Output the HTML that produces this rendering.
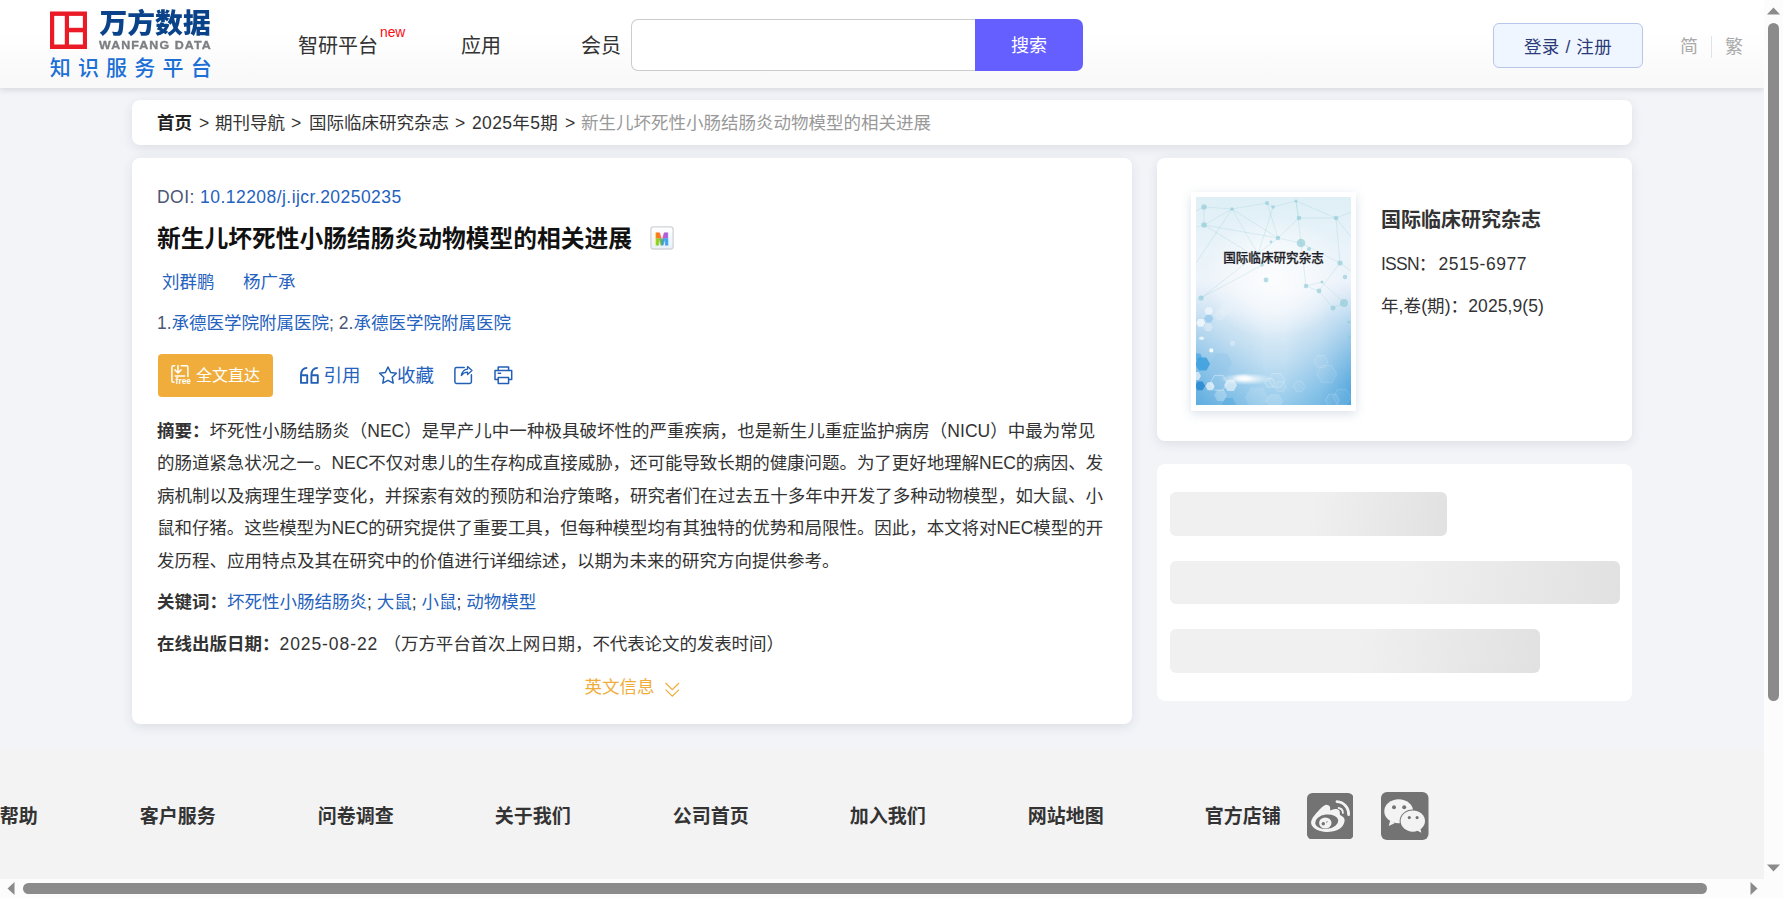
<!DOCTYPE html>
<html lang="zh-CN">
<head>
<meta charset="utf-8">
<title>新生儿坏死性小肠结肠炎动物模型的相关进展 - 万方数据知识服务平台</title>
<style>
*{box-sizing:border-box;margin:0;padding:0}
html,body{width:1783px;height:898px;overflow:hidden;background:#f2f4f8}
body{position:relative;font-family:"Liberation Sans","Noto Sans CJK SC",sans-serif;color:#333;font-size:17.5px;-webkit-font-smoothing:antialiased}
a{color:inherit;text-decoration:none}
.abs{position:absolute;white-space:nowrap}
#view{position:absolute;left:0;top:0;width:1764px;height:879px;overflow:hidden;background:#f2f4f8}
/* header */
#hdr{position:absolute;left:0;top:0;width:1764px;height:88px;background:linear-gradient(180deg,#ffffff 0%,#ffffff 35%,#f8f8f9 100%);box-shadow:0 2px 6px rgba(40,45,60,.14);z-index:5}
.nav{position:absolute;top:31.8px;height:28px;line-height:28px;font-size:20px;color:#333;white-space:nowrap}
#srch{position:absolute;left:631.4px;top:19px;width:345px;height:52px;border:1px solid #ccc;border-right:0;border-radius:7px 0 0 7px;background:#fff}
#sbtn{position:absolute;left:975.4px;top:19px;width:107.4px;height:52px;border-radius:0 7px 7px 0;background:#665fff;color:#fff;font-size:18px;line-height:52px;padding-top:1.4px;text-align:center;overflow:hidden}
#login{position:absolute;left:1493px;top:23px;width:150px;height:45px;border:1px solid #b7c7ea;border-radius:6px;background:#f0f6ff;color:#2b3a78;font-size:17.5px;line-height:43px;padding-top:1.6px;word-spacing:.6px;letter-spacing:.3px;text-align:center;overflow:hidden}
.lang{position:absolute;top:33.8px;font-size:18px;line-height:26px;color:#aaa}
/* cards */
.card{position:absolute;background:#fff;border-radius:8px;box-shadow:0 3px 11px rgba(40,50,70,.105)}
.ln{position:absolute;margin-top:1px;left:157px;white-space:nowrap;height:32px;line-height:32px;font-size:17.5px;color:#333}
b,.b{font-weight:700}
.blue,.ln.blue,.ln .blue{color:#2562be}
.sk{position:absolute;left:1170px;border-radius:6px;background:linear-gradient(100deg,#f0f0f0 0%,#f0f0f0 50%,#e1e1e1 100%)}
/* footer */
#ftr{position:absolute;left:0;top:749px;width:1764px;height:130px;background:#f3f3f3}
.fl{position:absolute;top:803px;margin-left:.8px;height:28px;line-height:28px;font-size:19px;font-weight:700;color:#333;white-space:nowrap}
/* scrollbars */
#vsb{position:absolute;left:1764px;top:0;width:19px;height:879px;background:#fcfcfc}
#hsb{position:absolute;left:0;top:879px;width:1783px;height:19px;background:#fcfcfc}
.thumb{position:absolute;background:#8b8b8b;border-radius:6px}
</style>
</head>
<body>
<div id="view">

<!-- HEADER -->
<div id="hdr">
  <svg class="abs" style="left:50px;top:11px" width="38" height="38" viewBox="0 0 38 38">
    <rect x="0" y="0.5" width="37" height="37.5" fill="#ea1b26"/>
    <rect x="4.2" y="4.9" width="10.6" height="28.6" fill="#fff"/>
    <rect x="19" y="4.9" width="13.9" height="11.9" fill="#fff"/>
    <rect x="19" y="21.3" width="13.9" height="12.2" fill="#fff"/>
  </svg>
  <div class="abs" style="left:99.5px;top:6.3px;font-size:27.8px;line-height:36px;font-weight:900;color:#0a4389;transform:scaleY(.99);transform-origin:0 0;font-family:'Liberation Sans','Noto Sans CJK SC',sans-serif;">万方数据</div>
  <div class="abs" style="left:99px;top:38px;font-size:11.5px;line-height:14px;font-weight:700;color:#7d7e82;letter-spacing:1.02px;transform:scaleX(1.08);transform-origin:0 0;-webkit-text-stroke:.35px #7d7e82;">WANFANG DATA</div>
  <div class="abs" style="left:49.7px;top:52.8px;font-weight:500;font-size:21px;line-height:30px;color:#1b6fd6;letter-spacing:7.2px;">知识服务平台</div>

  <div class="nav" style="left:298px">智研平台</div>
  <div class="abs" style="left:380px;top:25px;font-size:13.8px;line-height:16px;color:#fb0a12">new</div>
  <div class="nav" style="left:461px">应用</div>
  <div class="nav" style="left:581px">会员</div>

  <div id="srch"></div>
  <div id="sbtn">搜索</div>

  <div id="login">登录 / 注册</div>
  <div class="lang" style="left:1680px">简</div>
  <div class="abs" style="left:1711px;top:36px;width:1px;height:22px;background:#e3e3e3"></div>
  <div class="lang" style="left:1725px">繁</div>
</div>

<!-- BREADCRUMB -->
<div class="card" style="left:132px;top:100px;width:1500px;height:45px"></div>
<div class="ln" id="bc1" style="top:106px;left:157px;font-weight:700;color:#222">首页</div>
<div class="ln" style="top:106px;left:199px">&gt;</div>
<div class="ln" id="bc2" style="top:106px;left:215px">期刊导航</div>
<div class="ln" style="top:106px;left:291px">&gt;</div>
<div class="ln" id="bc3" style="top:106px;left:309px">国际临床研究杂志</div>
<div class="ln" style="top:106px;left:455px">&gt;</div>
<div class="ln" id="bc4" style="top:106px;left:472px;letter-spacing:.35px">2025年5期</div>
<div class="ln" style="top:106px;left:565px">&gt;</div>
<div class="ln" id="bc5" style="top:106px;left:581px;color:#999">新生儿坏死性小肠结肠炎动物模型的相关进展</div>

<!-- MAIN CARD -->
<div class="card" style="left:132px;top:158px;width:1000px;height:566px"></div>
<div class="ln" id="doi" style="top:180.2px;color:#4b5674;letter-spacing:.45px">DOI: <span class="blue">10.12208/j.ijcr.20250235</span></div>
<div class="abs" id="ttl" style="left:157px;top:220.8px;font-size:23.75px;line-height:36px;font-weight:700;color:#111">新生儿坏死性小肠结肠炎动物模型的相关进展</div>
<svg class="abs" id="mbadge" style="left:649px;top:225px" width="26" height="26" viewBox="649 225 26 26">
  <defs>
    <linearGradient id="mbg" x1="0" y1="0" x2="0" y2="1"><stop offset="0" stop-color="#ffffff"/><stop offset="1" stop-color="#e9f0f9"/></linearGradient>
    <linearGradient id="mtop" x1="0" y1="0" x2="1" y2="0"><stop offset="0" stop-color="#fb7a10"/><stop offset=".34" stop-color="#f9761a"/><stop offset=".5" stop-color="#e8504a"/><stop offset=".68" stop-color="#b35ad6"/><stop offset="1" stop-color="#a45ee0"/></linearGradient>
    <linearGradient id="mbot" x1="0" y1="0" x2="1" y2="0"><stop offset="0" stop-color="#8fd018"/><stop offset=".32" stop-color="#86c926"/><stop offset=".5" stop-color="#4aa596"/><stop offset=".7" stop-color="#3f9fe6"/><stop offset="1" stop-color="#3aa0ee"/></linearGradient>
    <clipPath id="mc1"><rect x="649" y="225" width="26" height="13.4"/></clipPath>
    <clipPath id="mc2"><rect x="649" y="238.4" width="26" height="13"/></clipPath>
  </defs>
  <rect x="650.9" y="226.8" width="22.2" height="22.2" rx="2.6" fill="url(#mbg)" stroke="#d2d4d8" stroke-width="1.3"/>
  <text x="661.9" y="244.6" text-anchor="middle" font-family="'Liberation Sans',sans-serif" font-weight="700" font-size="16" fill="url(#mtop)" stroke="url(#mtop)" stroke-width=".9" clip-path="url(#mc1)">M</text>
  <text x="661.9" y="244.6" text-anchor="middle" font-family="'Liberation Sans',sans-serif" font-weight="700" font-size="16" fill="url(#mbot)" stroke="url(#mbot)" stroke-width=".9" clip-path="url(#mc2)">M</text>
</svg>
<div class="ln blue" id="au1" style="left:162px;top:265.2px">刘群鹏</div>
<div class="ln blue" id="au2" style="left:243px;top:265.2px">杨广承</div>
<div class="ln" id="aff" style="top:306px;color:#4b5674">1.<span class="blue">承德医学院附属医院</span>; 2.<span class="blue">承德医学院附属医院</span></div>

<div class="abs" id="fullbtn" style="left:158px;top:354px;width:115px;height:43px;border-radius:4px;background:#f0ad3b"></div>
<svg class="abs" style="left:168px;top:362px" width="26" height="26" viewBox="168 362 26 26" fill="none" stroke="#fff" stroke-width="1.5" stroke-linecap="round" stroke-linejoin="round">
  <path d="M174.6 365.8 H173.4 Q171.9 365.8 171.9 367.3 V380.8 Q171.9 382.3 173.4 382.3 H174"/>
  <path d="M181.2 365.8 H186.4 Q187.9 365.8 187.9 367.3 V376.6"/>
  <path d="M178 365.4 V372.6 M174.9 369.9 L178 372.9 L181.2 369.9"/>
  <path d="M175.2 375.9 H184.6"/>
  <text x="175.6" y="383.9" font-family="'Liberation Sans',sans-serif" font-size="8.3" font-weight="700" fill="#fff" stroke="none" letter-spacing=".05">free</text>
</svg>
<div class="abs" id="fulltxt" style="left:196px;top:361px;font-size:16px;line-height:30px;color:#fff">全文直达</div>
<svg class="abs" style="left:298px;top:364px" width="24" height="24" viewBox="298 364 24 24" fill="none" stroke="#2260b6" stroke-width="1.9" stroke-linejoin="round">
  <path d="M307.2 367.9 Q301 368 301 375.3 M301 375.3 H307.2 V382.9 H301 Z"/>
  <path d="M317.8 367.9 Q311.4 368 311.4 375.3 M311.4 375.3 H317.8 V382.9 H311.4 Z"/>
</svg>
<svg class="abs" style="left:377px;top:364px" width="22" height="22" viewBox="377 364 22 22" fill="none" stroke="#2260b6" stroke-width="1.5" stroke-linejoin="round">
  <path d="M388 367 L390.6 372.4 L396.4 373.2 L392.2 377.3 L393.2 383.1 L388 380.3 L382.8 383.1 L383.8 377.3 L379.6 373.2 L385.4 372.4 Z"/>
</svg>
<svg class="abs" style="left:452px;top:364px" width="22" height="22" viewBox="452 364 22 22" fill="none" stroke="#2260b6" stroke-width="1.5" stroke-linejoin="round" stroke-linecap="round">
  <path d="M464.2 367.5 H456.6 Q454.9 367.5 454.9 369.2 V381.7 Q454.9 383.4 456.6 383.4 H469.7 Q471.4 383.4 471.4 381.7 V374.8"/>
  <path d="M461.3 375.6 Q462.6 369.6 467.5 369.2 V366.6 L472 370.6 L467.5 374.6 V372.2 Q463.8 372.2 461.3 375.6 Z" stroke-width="1.3"/>
</svg>
<svg class="abs" style="left:492px;top:364px" width="22" height="22" viewBox="492 364 22 22" fill="none" stroke="#2260b6" stroke-width="1.5" stroke-linejoin="round" stroke-linecap="round">
  <path d="M498.2 370.4 V367 H508.6 V370.4"/>
  <path d="M498.2 379.6 H495 V370.4 H511.7 V379.6 H508.6"/>
  <path d="M498.2 377.4 H508.6 V383.4 H498.2 Z"/>
  <path d="M498.2 373.3 H500.6"/>
</svg>
<div class="ln blue" id="cite" style="left:323.4px;top:359px;font-size:18.5px">引用</div>
<div class="ln blue" id="fav" style="left:397px;top:359px;font-size:18.5px">收藏</div>

<div class="ln" id="a1" style="top:414px;letter-spacing:.02px"><b>摘要：</b>坏死性小肠结肠炎（NEC）是早产儿中一种极具破坏性的严重疾病，也是新生儿重症监护病房（NICU）中最为常见</div>
<div class="ln" id="a2" style="top:446px;letter-spacing:-.05px">的肠道紧急状况之一。NEC不仅对患儿的生存构成直接威胁，还可能导致长期的健康问题。为了更好地理解NEC的病因、发</div>
<div class="ln" id="a3" style="top:479px;letter-spacing:.02px">病机制以及病理生理学变化，并探索有效的预防和治疗策略，研究者们在过去五十多年中开发了多种动物模型，如大鼠、小</div>
<div class="ln" id="a4" style="top:511px;letter-spacing:-.05px">鼠和仔猪。这些模型为NEC的研究提供了重要工具，但每种模型均有其独特的优势和局限性。因此，本文将对NEC模型的开</div>
<div class="ln" id="a5" style="top:544px">发历程、应用特点及其在研究中的价值进行详细综述，以期为未来的研究方向提供参考。</div>
<div class="ln" id="kw" style="top:585px"><b>关键词：</b><span class="blue">坏死性小肠结肠炎</span>; <span class="blue">大鼠</span>; <span class="blue">小鼠</span>; <span class="blue">动物模型</span></div>
<div class="ln" id="pd" style="top:627px"><b>在线出版日期：</b><span style="letter-spacing:.92px">2025-08-22</span><span style="position:absolute;left:226.6px;top:0;letter-spacing:-.1px">（万方平台首次上网日期，不代表论文的发表时间）</span></div>
<div class="ln" id="en" style="left:584.5px;top:670.3px;color:#f0ad3b">英文信息</div>
<svg class="abs" style="left:663px;top:680px" width="20" height="20" viewBox="663 680 20 20" fill="none" stroke="#f0ad3b" stroke-width="1.25"><path d="M665.6 683 L672.3 689.6 L679 683 M665.6 689.6 L672.3 696.2 L679 689.6"/></svg>

<!-- JOURNAL CARD -->
<div class="card" style="left:1157px;top:158px;width:475px;height:283px"></div>
<div class="abs" id="cover" style="left:1191px;top:191.5px;width:165px;height:219px;background:#fff;box-shadow:0 3px 10px rgba(70,110,150,.20)"></div>
<svg class="abs" style="left:1196px;top:196.5px" width="155" height="208.5" viewBox="0 0 155 208.5">
  <defs>
    <linearGradient id="cv1" x1="0" y1="0" x2="0" y2="1"><stop offset="0" stop-color="#dfeff6"/><stop offset=".25" stop-color="#e9f3f9"/><stop offset=".45" stop-color="#eef3fa"/><stop offset=".55" stop-color="#e6f0f9"/><stop offset=".68" stop-color="#d5e8f5"/><stop offset=".8" stop-color="#c0def2"/><stop offset=".92" stop-color="#a5d2ee"/><stop offset="1" stop-color="#93c9ea"/></linearGradient>
    <radialGradient id="cv2" cx=".5" cy=".5" r=".5"><stop offset="0" stop-color="#fff" stop-opacity=".8"/><stop offset=".5" stop-color="#fff" stop-opacity=".5"/><stop offset="1" stop-color="#fff" stop-opacity="0"/></radialGradient>
    <radialGradient id="cv3" cx=".5" cy=".5" r=".5"><stop offset="0" stop-color="#fff" stop-opacity="1"/><stop offset=".4" stop-color="#fff" stop-opacity=".6"/><stop offset="1" stop-color="#fff" stop-opacity="0"/></radialGradient>
    <linearGradient id="cv4" x1="0" y1="0" x2="1" y2="0"><stop offset="0" stop-color="#3d9ad8" stop-opacity=".62"/><stop offset=".2" stop-color="#3d9ad8" stop-opacity=".3"/><stop offset=".45" stop-color="#3d9ad8" stop-opacity="0"/><stop offset=".58" stop-color="#3d9ad8" stop-opacity="0"/><stop offset=".8" stop-color="#3d9ad8" stop-opacity=".32"/><stop offset="1" stop-color="#3d9ad8" stop-opacity=".82"/></linearGradient>
    <linearGradient id="cv5" x1="0" y1="0" x2="0" y2="1"><stop offset="0" stop-color="#fff" stop-opacity="0"/><stop offset=".4" stop-color="#fff" stop-opacity="0"/><stop offset="1" stop-color="#fff" stop-opacity="1"/></linearGradient>
    <mask id="cvm"><rect width="155" height="208.5" fill="url(#cv5)"/></mask>
  </defs>
  <rect width="155" height="208.5" fill="url(#cv1)"/>
  <rect width="155" height="208.5" fill="url(#cv4)" mask="url(#cvm)"/>
  <ellipse cx="78" cy="80" rx="70" ry="62" fill="url(#cv2)"/>
  <g stroke="#8cc7d2" stroke-opacity=".4" stroke-width=".6" fill="none">
    <path d="M0 14 L8 10 L36 12 L71 6 L77 10 L100 4 L140 21 L155 15"/>
    <path d="M8 10 L8 28 L36 12 L62 57 M36 12 L82 41 L103 21 L100 4 M71 6 L82 41 L105 46 L110 89 M103 21 L140 21 L144 66 L123 94"/>
    <path d="M0 30 L8 28 L82 41 M5 101 L70 66 L8 28 M5 101 L82 41 M105 46 L144 66 M110 89 L126 85 L148 106 M110 89 L123 94 L137 111 L148 106 M140 21 L155 40 M144 66 L155 74"/>
    <path d="M77 10 L62 57 M36 12 L0 66 M100 4 L105 46"/>
  </g>
  <g fill="#8fcbd6" fill-opacity=".65">
    <circle cx="8" cy="10" r="2.8"/><circle cx="8" cy="28" r="2.8"/><circle cx="36" cy="12" r="1.8"/><circle cx="71" cy="6" r="2"/><circle cx="77" cy="10" r="1.8"/>
    <circle cx="100" cy="4" r="1.5"/><circle cx="103" cy="21" r="2.3"/><circle cx="140" cy="21" r="2.3"/><circle cx="82" cy="41" r="2.2"/><circle cx="105" cy="46" r="4.3"/>
    <circle cx="75" cy="45" r="1.4"/><circle cx="113" cy="52" r="2"/><circle cx="66" cy="68" r="1.8"/><circle cx="70" cy="83" r="2.4"/><circle cx="110" cy="89" r="2.3"/>
    <circle cx="123" cy="94" r="2.4"/><circle cx="126" cy="85" r="1.5"/><circle cx="148" cy="106" r="4"/><circle cx="137" cy="111" r="2.5"/><circle cx="144" cy="66" r="2.6"/>
    <circle cx="149" cy="80" r="2.2"/><circle cx="5" cy="101" r="2.6"/><circle cx="153" cy="125" r="1.6"/><circle cx="153.5" cy="140" r="1.6"/>
  </g>
  <path d="M17.2 114.1 L15.0 117.9 L10.6 117.9 L8.4 114.1 L10.6 110.3 L15.0 110.3Z" fill="#fff" fill-opacity="0.5"/>
  <path d="M17.3 121.6 L15.1 125.5 L10.6 125.5 L8.3 121.6 L10.5 117.7 L15.1 117.7Z" fill="#94c6ea" fill-opacity="0.75"/>
  <path d="M9.2 125.9 L7.0 129.8 L2.5 129.8 L0.2 125.9 L2.4 122.0 L7.0 122.0Z" fill="#fff" fill-opacity="0.7"/>
  <path d="M16.7 130.3 L14.4 134.2 L9.9 134.2 L7.7 130.3 L9.9 126.4 L14.4 126.4Z" fill="#fff" fill-opacity="0.3"/>
  <path d="M39.5 146.3 L38.0 148.9 L35.0 148.9 L33.5 146.3 L35.0 143.7 L38.0 143.7Z" fill="#fff" fill-opacity="0.3"/>
  <path d="M36.3 165.8 L30.8 175.3 L19.8 175.3 L14.3 165.8 L19.8 156.3 L30.8 156.3Z" fill="#8fc3e8" fill-opacity="0.35"/>
  <path d="M14.1 167.1 L10.4 173.6 L2.9 173.6 L-0.9 167.1 L2.8 160.6 L10.4 160.6Z" fill="#3b9fde" fill-opacity="0.85"/>
  <path d="M6.0 160.0 L4.0 163.5 L0.0 163.5 L-2.0 160.0 L-0.0 156.5 L4.0 156.5Z" fill="#3b9fde" fill-opacity="0.6"/>
  <path d="M9.1 188.9 L6.6 193.2 L1.6 193.2 L-0.9 188.9 L1.6 184.6 L6.6 184.6Z" fill="#2c8ad2" fill-opacity="0.9"/>
  <path d="M18.7 189.3 L16.4 193.3 L11.8 193.3 L9.5 189.3 L11.8 185.3 L16.4 185.3Z" fill="#fff" fill-opacity="0.65"/>
  <path d="M41.1 188.3 L37.9 193.9 L31.4 193.9 L28.1 188.3 L31.3 182.7 L37.9 182.7Z" fill="#fff" fill-opacity="0.55"/>
  <path d="M31.2 198.3 L27.9 203.9 L21.4 203.9 L18.2 198.3 L21.4 192.7 L27.9 192.7Z" fill="#fff" fill-opacity="0.25"/>
  <path d="M5.0 179.0 L2.8 182.9 L-1.7 182.9 L-4.0 179.0 L-1.8 175.1 L2.8 175.1Z" fill="#fff" fill-opacity="0.6"/>
  <path d="M72.8 200.8 L66.8 211.2 L54.8 211.2 L48.8 200.8 L54.8 190.4 L66.8 190.4Z" fill="#fff" fill-opacity="0.12"/>
  <path d="M87.3 204.5 L82.8 212.3 L73.8 212.3 L69.3 204.5 L73.8 196.7 L82.8 196.7Z" fill="#fff" fill-opacity="0.16"/>
  <path d="M40.0 207.0 L36.5 213.1 L29.5 213.1 L26.0 207.0 L29.5 200.9 L36.5 200.9Z" fill="#3f9ddb" fill-opacity="0.35"/>
  <path d="M30.0 118.0 L27.0 123.2 L21.0 123.2 L18.0 118.0 L21.0 112.8 L27.0 112.8Z" fill="#fff" fill-opacity="0.18"/>
  <path d="M37.0 112.0 L33.5 118.1 L26.5 118.1 L23.0 112.0 L26.5 105.9 L33.5 105.9Z" fill="#fff" fill-opacity="0.12"/>
  <path d="M31.3 185.8 L27.1 193.2 L18.6 193.2 L14.3 185.8 L18.5 178.4 L27.1 178.4Z" fill="#fff" fill-opacity=".06" stroke="#fff" stroke-opacity="0.55" stroke-width=".7"/>
  <path d="M88.8 183.3 L84.8 190.2 L76.8 190.2 L72.8 183.3 L76.8 176.4 L84.8 176.4Z" fill="#fff" fill-opacity=".06" stroke="#fff" stroke-opacity="0.35" stroke-width=".7"/>
  <path d="M78.9 185.8 L76.4 190.1 L71.4 190.1 L68.9 185.8 L71.4 181.5 L76.4 181.5Z" fill="#fff" fill-opacity=".06" stroke="#fff" stroke-opacity="0.4" stroke-width=".7"/>
  <path d="M90.0 189.5 L87.2 194.3 L81.8 194.3 L79.0 189.5 L81.8 184.7 L87.2 184.7Z" fill="#fff" fill-opacity=".06" stroke="#fff" stroke-opacity="0.3" stroke-width=".7"/>
  <path d="M132.0 164.6 L128.5 170.7 L121.5 170.7 L118.0 164.6 L121.5 158.5 L128.5 158.5Z" fill="#fff" fill-opacity=".06" stroke="#fff" stroke-opacity="0.22" stroke-width=".7"/>
  <path d="M140.7 177.0 L135.7 185.7 L125.7 185.7 L120.7 177.0 L125.7 168.3 L135.7 168.3Z" fill="#fff" fill-opacity=".06" stroke="#fff" stroke-opacity="0.2" stroke-width=".7"/>
  <path d="M109.2 189.5 L106.2 194.7 L100.2 194.7 L97.2 189.5 L100.2 184.3 L106.2 184.3Z" fill="#fff" fill-opacity=".06" stroke="#fff" stroke-opacity="0.2" stroke-width=".7"/>
  <path d="M143.3 203.3 L139.8 209.4 L132.8 209.4 L129.3 203.3 L132.8 197.2 L139.8 197.2Z" fill="#fff" fill-opacity=".06" stroke="#fff" stroke-opacity="0.25" stroke-width=".7"/>
  <path d="M155.0 200.0 L150.5 207.8 L141.5 207.8 L137.0 200.0 L141.5 192.2 L150.5 192.2Z" fill="#fff" fill-opacity=".06" stroke="#fff" stroke-opacity="0.18" stroke-width=".7"/>
  <ellipse cx="5.6" cy="141.3" rx="2.6" ry="1.8" fill="#fff" fill-opacity=".7"/>
  <circle cx="15.3" cy="153.4" r="2.1" fill="#fff" fill-opacity=".9"/>
  <ellipse cx="50" cy="182" rx="26" ry="6" fill="url(#cv3)"/>
  <ellipse cx="47" cy="181" rx="11" ry="4.2" fill="url(#cv3)"/>
  <text x="77.5" y="65.3" text-anchor="middle" font-family="'Liberation Sans','Noto Sans CJK SC',sans-serif" font-size="12.6" font-weight="500" fill="#1e1e28" stroke="#1e1e28" stroke-width=".25">国际临床研究杂志</text>
</svg>
<div class="abs" id="jt" style="left:1381px;top:203.8px;font-size:20px;line-height:32px;font-weight:700;color:#333">国际临床研究杂志</div>
<div class="ln" id="issn" style="left:1381px;top:247px"><span style="letter-spacing:-.75px">ISSN</span>：<span style="position:absolute;left:57.4px;top:0;letter-spacing:.55px">2515-6977</span></div>
<div class="ln" id="yv" style="left:1381px;top:289px;letter-spacing:.1px">年,卷(期)：2025,9(5)</div>

<!-- SKELETON CARD -->
<div class="card" style="left:1157px;top:464px;width:475px;height:236.5px;box-shadow:none"></div>
<div class="sk" style="top:492px;width:277px;height:44px"></div>
<div class="sk" style="top:561px;width:450px;height:43px"></div>
<div class="sk" style="top:629px;width:370px;height:44px"></div>

<!-- FOOTER -->
<div id="ftr"></div>
<div class="fl" style="left:-1px">帮助</div>
<div class="fl" style="left:139px">客户服务</div>
<div class="fl" style="left:317px">问卷调查</div>
<div class="fl" style="left:494px">关于我们</div>
<div class="fl" style="left:672px">公司首页</div>
<div class="fl" style="left:849px">加入我们</div>
<div class="fl" style="left:1027px">网站地图</div>
<div class="fl" style="left:1204px">官方店铺</div>
<svg class="abs" id="weibo" style="left:1306.9px;top:792.7px" width="46.5" height="46.6" viewBox="0 0 46.5 46.6">
  <rect width="46.5" height="46.6" rx="5.4" fill="#737373"/>
  <path d="M4.1 29.2 C4.3 26 7.6 21.6 11.1 18.2 C13.2 16.1 14.6 14.4 16.6 13.1 C18 12.2 19.2 11.7 20.2 11.9 C21.8 12.1 22.8 13 22.9 13.9 C23.3 15 23.1 16.4 23.3 17.4 C24.6 16.8 25.6 16.5 26.9 16.3 C28 16.1 29.4 16 30.4 16.3 C31.9 16.8 32.5 17.7 32.7 18.6 C33 19.9 32.6 21 33.1 22.1 C34.9 23 36.3 24 37.1 25.3 C37.7 26.3 37.8 27.4 37.5 28.4 C37 30.9 35.8 33 33.9 34.7 C31.9 36.5 29.2 37.6 26.1 38.2 C23.8 38.8 21.4 39.1 19 39 C15.8 38.9 12.9 38.3 10.4 37.1 C8.2 36.1 6.4 34.8 5.3 33.1 C4.5 31.9 4 30.6 4.1 29.2 Z" fill="#f3f3f3"/>
  <ellipse cx="19.7" cy="28.7" rx="11.6" ry="7.2" transform="rotate(-7 19.7 28.7)" fill="#737373"/>
  <ellipse cx="18.3" cy="30" rx="6.2" ry="5.6" fill="#f3f3f3"/>
  <circle cx="16.3" cy="30.8" r="1.7" fill="#737373"/>
  <ellipse cx="19.8" cy="28.9" rx=".9" ry=".55" transform="rotate(-25 19.8 28.9)" fill="#737373"/>
  <path d="M31.6 15 A5 5 0 0 1 35.9 19.9" fill="none" stroke="#f3f3f3" stroke-width="1.8" stroke-linecap="round"/>
  <path d="M30 8.7 A12.3 12.3 0 0 1 41.6 21.6" fill="none" stroke="#f3f3f3" stroke-width="2.8" stroke-linecap="round"/>
</svg>
<svg class="abs" id="wechat" style="left:1381.3px;top:792px" width="47.5" height="48" viewBox="0 0 47.5 48">
  <rect width="47.5" height="48" rx="6" fill="#737373"/>
  <ellipse cx="17.7" cy="19.3" rx="14.4" ry="12" fill="#f3f3f3"/>
  <path d="M9.2 28.6 L7.7 34 L13.6 31.2 Z" fill="#f3f3f3"/>
  <ellipse cx="31.8" cy="29.1" rx="13.2" ry="11.6" fill="#737373"/>
  <ellipse cx="31.8" cy="29.1" rx="12.2" ry="10.6" fill="#f3f3f3"/>
  <path d="M36 38.5 L40.3 40.7 L39.3 36.2 Z" fill="#f3f3f3"/>
  <circle cx="13" cy="15.3" r="2" fill="#737373"/><circle cx="23.2" cy="15.3" r="2" fill="#737373"/>
  <circle cx="28.3" cy="25.6" r="1.55" fill="#737373"/><circle cx="36.1" cy="25.6" r="1.55" fill="#737373"/>
</svg>
</div>

<!-- SCROLLBARS -->
<div id="vsb">
  <svg class="abs" style="left:3px;top:7px" width="13" height="8" viewBox="0 0 13 8"><path d="M0 7.5 L6.5 0.5 L13 7.5 Z" fill="#8b8b8b"/></svg>
  <div class="thumb" style="left:4px;top:23px;width:11px;height:678px"></div>
  <svg class="abs" style="left:3px;top:864px" width="13" height="8" viewBox="0 0 13 8"><path d="M0 0.5 L13 0.5 L6.5 7.5 Z" fill="#8b8b8b"/></svg>
</div>
<div id="hsb">
  <svg class="abs" style="left:7px;top:3px" width="8" height="13" viewBox="0 0 8 13"><path d="M7.5 0 L7.5 13 L0.5 6.5 Z" fill="#8b8b8b"/></svg>
  <div class="thumb" style="left:23px;top:4px;width:1684px;height:11px"></div>
  <svg class="abs" style="left:1750px;top:3px" width="8" height="13" viewBox="0 0 8 13"><path d="M0.5 0 L0.5 13 L7.5 6.5 Z" fill="#8b8b8b"/></svg>
</div>
</body>
</html>
